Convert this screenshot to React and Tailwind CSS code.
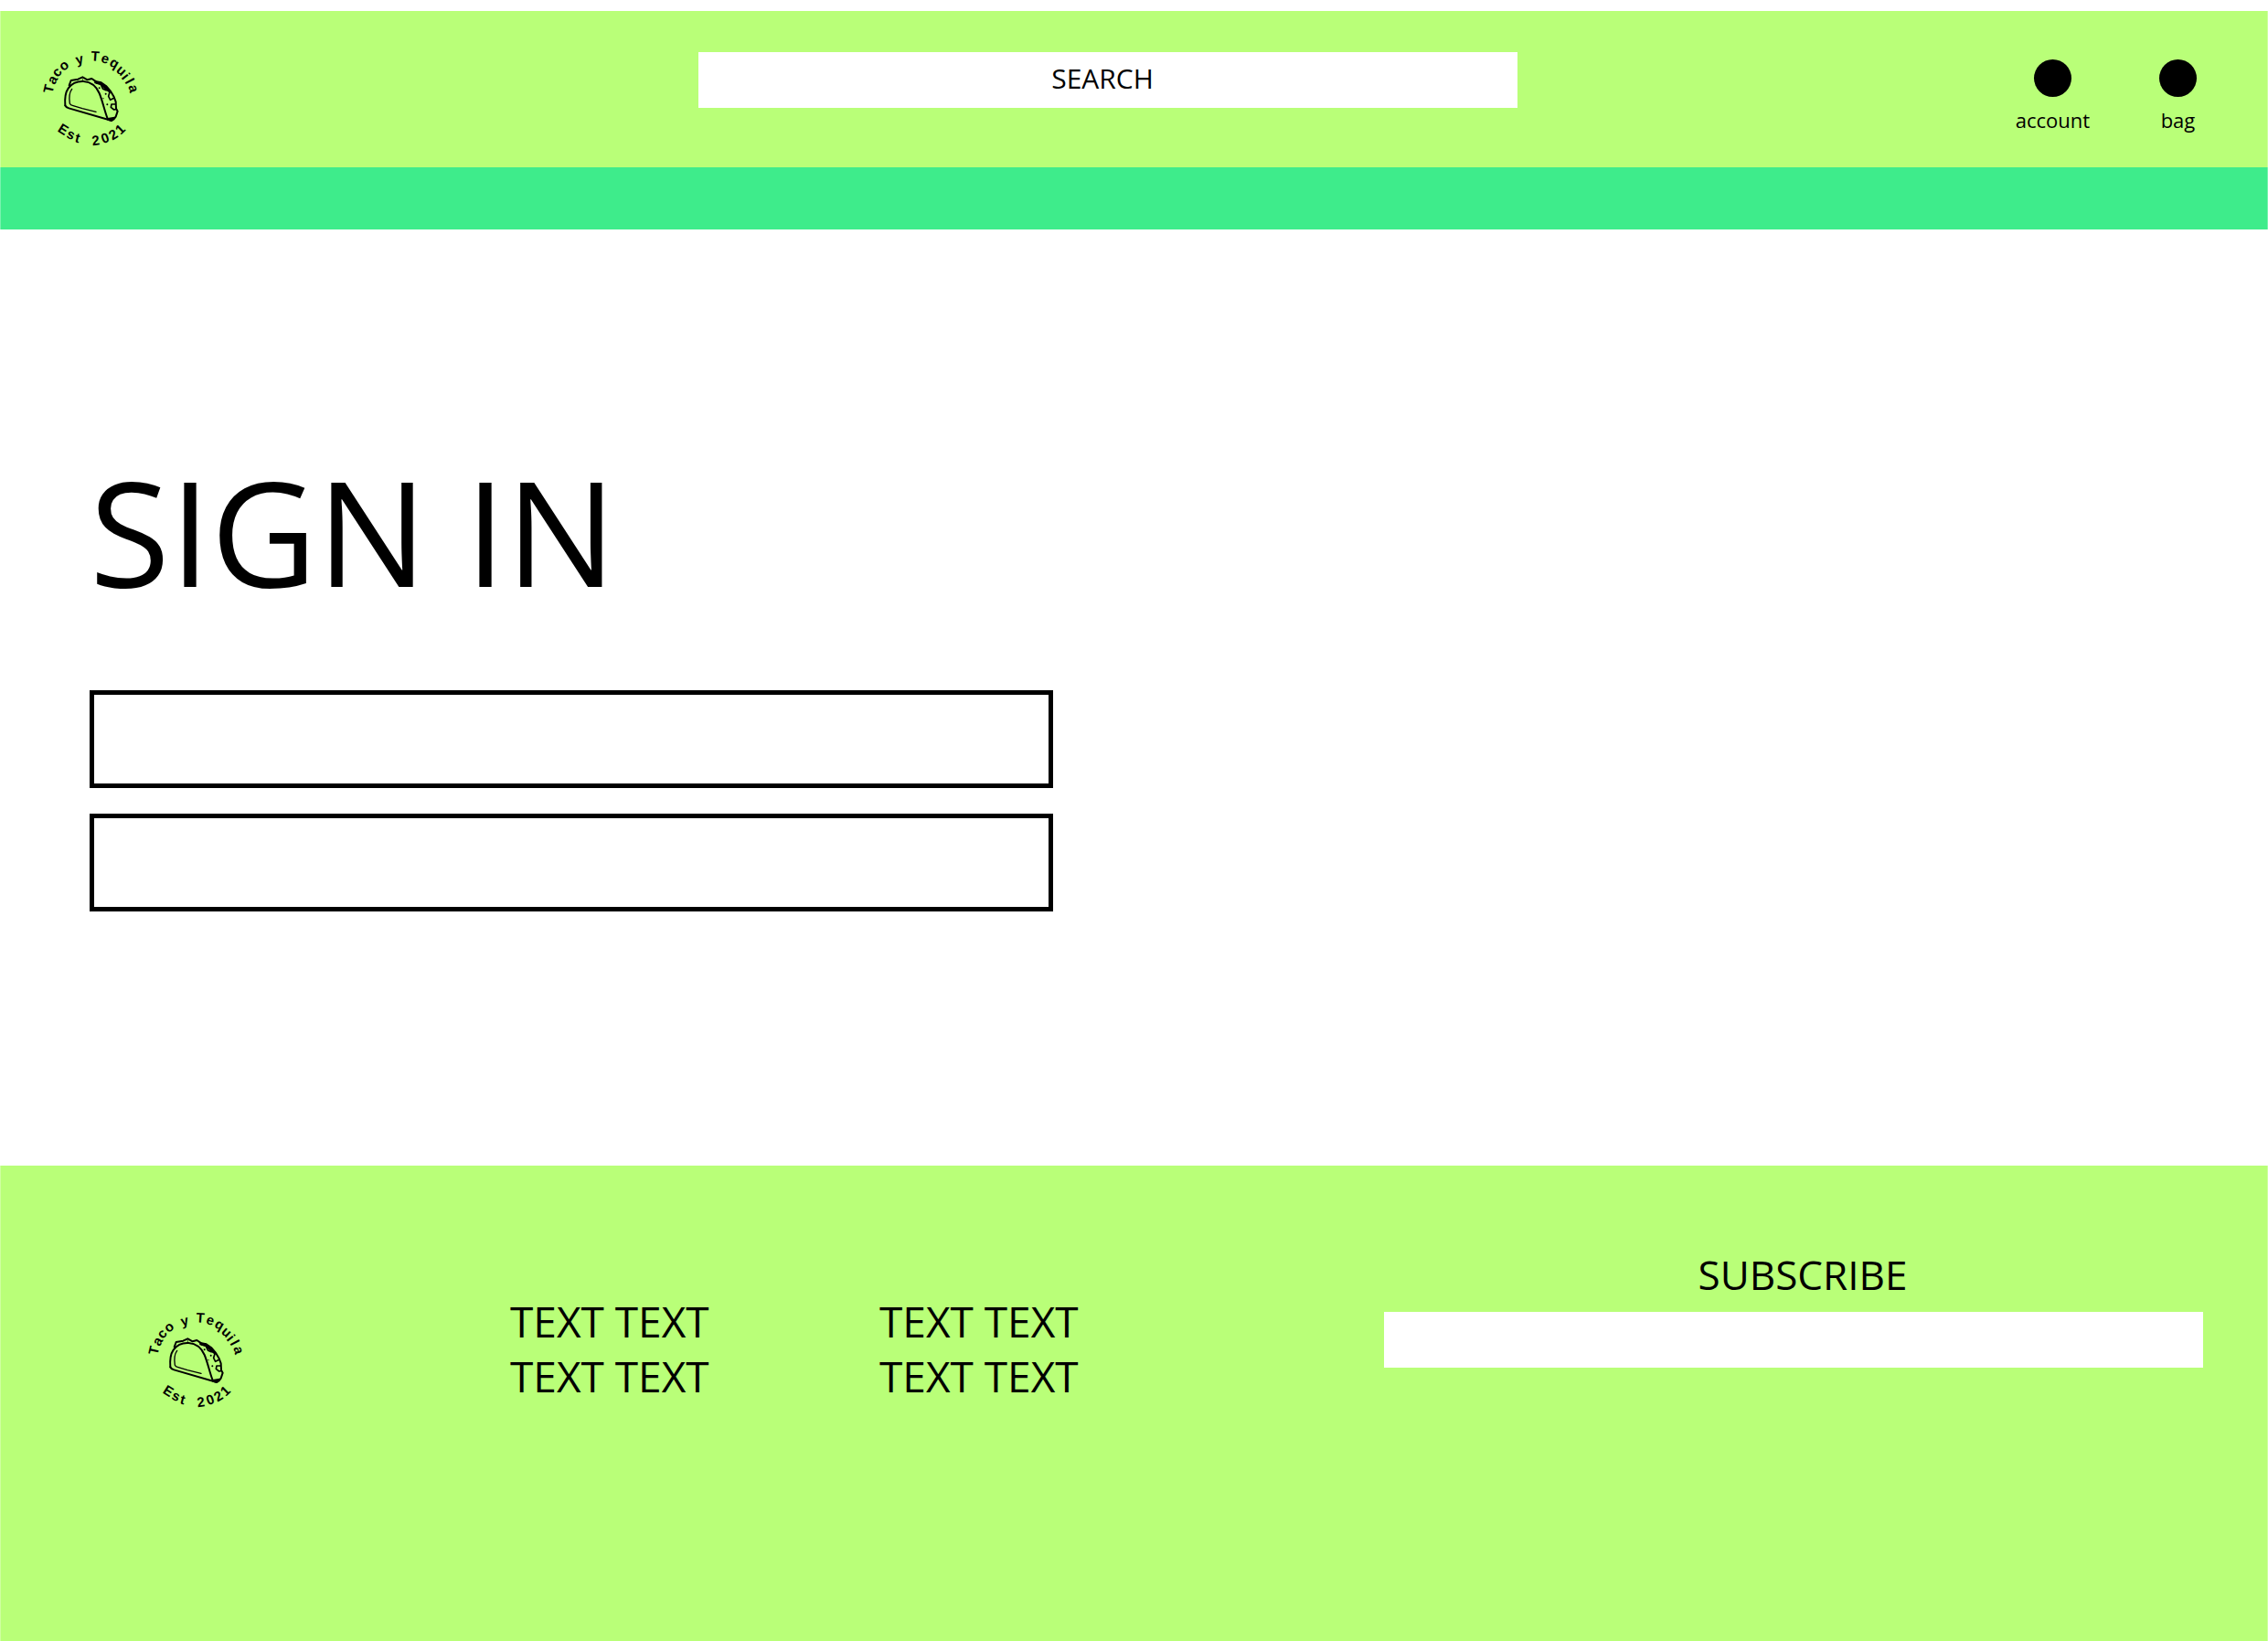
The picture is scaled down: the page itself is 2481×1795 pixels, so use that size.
// [character, centre x, centre y, rotation, glyph width]
const TOP = [
  ["T", 69, 171, -77, 28], ["a", 84, 143, -62, 25], ["c", 99, 119, -50, 25], ["o", 121, 97, -36, 27],
  [" ", 145, 85, -24, 12], ["y", 171, 77, -14, 25], [" ", 197, 70, -4, 12],
  ["T", 223, 64, 4, 28], ["e", 254, 75, 16, 25], ["q", 284, 89, 30, 27], ["u", 307, 113, 42, 27],
  ["i", 324, 130, 52, 13], ["l", 337, 146, 62, 13], ["a", 346, 171, 76, 25],
];
const BOTTOM = [
  ["E", 118, 304, 32, 30], ["s", 141, 324, 24, 25], ["t", 165, 332, 14, 15], [" ", 195, 340, 4, 12],
  ["2", 224, 340, -8, 25], ["0", 254, 332, -20, 25], ["2", 281, 320, -32, 25], ["1", 304, 303, -44, 25],
];

// Letters set one by one around the badge, each centred on its own spot.
function RingText({ glyphs }) {
  const placed = glyphs.map(([ch, cx, cy, deg, w]) => {
    const a = (deg * Math.PI) / 180;
    const h = /[aceosuyq]/.test(ch) ? 24 : 33;
    return {
      x: Math.round(cx - (w / 2) * Math.cos(a) - (h / 2) * Math.sin(a)),
      y: Math.round(cy - (w / 2) * Math.sin(a) + (h / 2) * Math.cos(a)),
    };
  });
  return (
    <text
      x={placed.map((p) => p.x).join(" ")}
      y={placed.map((p) => p.y).join(" ")}
      rotate={glyphs.map((g) => g[3]).join(" ")}
      className='font-["Liberation_Sans_Narrow","Liberation_Sans",sans-serif] text-[45px] font-bold'
    >
      {glyphs.map((g) => g[0]).join("")}
    </text>
  );
}

function Logo() {
  return (
    <svg viewBox="0 0 420 420" className="size-[140px] shrink-0" role="img" aria-label="Taco y Tequila, Est 2021">
      <RingText glyphs={TOP} />
      <RingText glyphs={BOTTOM} />
      <g fill="none" stroke="black" strokeWidth="6" strokeLinecap="round" strokeLinejoin="round">
        <path d="M124 226C122 200 124 184 134 170C146 153 164 146 184 147C210 149 227 165 236 186C248 215 253 245 264 272" />
        <path d="M124 226Q126 232 136 235L264 272Q276 279 283 272L290 263L296 245L291 236L290 214L284 198L272 178L258 162L242 151L226 148L211 138L197 142L181 133L166 140L143 144L137 160" />
        <path d="M146 172C137 184 136 200 139 220Q141 225 150 227L180 236L225 247" strokeWidth="4" />
        <path d="M222 151L240 156L248 172L258 176L260 168L270 182L266 196L272 208L284 202M288 222L276 222L274 232L284 240L292 238" strokeWidth="5" />
        <path d="M220 146L242 151L262 168L272 184L258 176L240 158L226 154Z" fill="black" strokeWidth="2" />
        <path d="M264 270L286 266L276 276Z" fill="black" />
      </g>
      <g>
        <circle cx="181" cy="141" r="2" />
        <circle cx="236" cy="169" r="3" />
        <circle cx="257" cy="188" r="3" />
        <circle cx="249" cy="203" r="2" />
        <circle cx="262" cy="223" r="3" />
      </g>
    </svg>
  );
}

function RoundLink({ label }) {
  return (
    <a href="#" className="flex w-[137px] flex-col items-center gap-[9px] text-[22px] leading-8">
      <span className="size-[41px] rounded-full bg-black" />
      {label}
    </a>
  );
}

function LinkColumn() {
  return (
    <ul className="w-[404px] text-[46px] leading-[60px]">
      <li><a href="#">TEXT TEXT</a></li>
      <li><a href="#">TEXT TEXT</a></li>
    </ul>
  );
}

export default function App() {
  return (
    <div className='bg-white pt-3 font-["Open_Sans","Noto_Sans",sans-serif] text-black'>
      <header className="grid h-[171px] grid-cols-[764fr_896fr_821fr] items-start border-x border-white/30 bg-[#b9ff78]">
        <a href="#" className="ml-[29px] mt-7 w-fit"><Logo /></a>
        <input
          type="text"
          aria-label="Search"
          placeholder="SEARCH"
          className="mt-[45px] h-[61px] w-full bg-white pb-1 pr-3 text-center text-[30px] placeholder:text-black placeholder:opacity-100"
        />
        <nav className="mr-[29px] mt-[53px] flex justify-end">
          <RoundLink label="account" />
          <RoundLink label="bag" />
        </nav>
      </header>
      <div className="h-[68px] border-x border-white/30 bg-[#3eec8b]" />

      <main className="px-[98px] pb-[278px] pt-[233px]">
        <h1 className="text-[160px] leading-[192px]">SIGN IN</h1>
        <form className="mt-[79px] flex w-full max-w-[1054px] flex-col gap-7">
          <input type="email" aria-label="Email" className="h-[107px] border-5 border-black px-6 text-5xl" />
          <input type="password" aria-label="Password" className="h-[107px] border-5 border-black px-6 text-5xl" />
        </form>
      </main>

      <footer className="flex h-[520px] items-start border-x border-white/30 bg-[#b9ff78] pr-[70px]">
        <a href="#" className="ml-[144px] mt-[145px]"><Logo /></a>
        <nav className="ml-[273px] mt-[140px] flex">
          <LinkColumn />
          <LinkColumn />
        </nav>
        <form className="ml-auto mt-[89px] flex w-[896px] flex-col">
          <label htmlFor="subscribe" className="pl-5 text-center text-[44px] leading-[60px]">SUBSCRIBE</label>
          <input id="subscribe" type="email" className="mt-[11px] h-[61px] bg-white px-6 text-[30px]" />
        </form>
      </footer>
    </div>
  );
}
